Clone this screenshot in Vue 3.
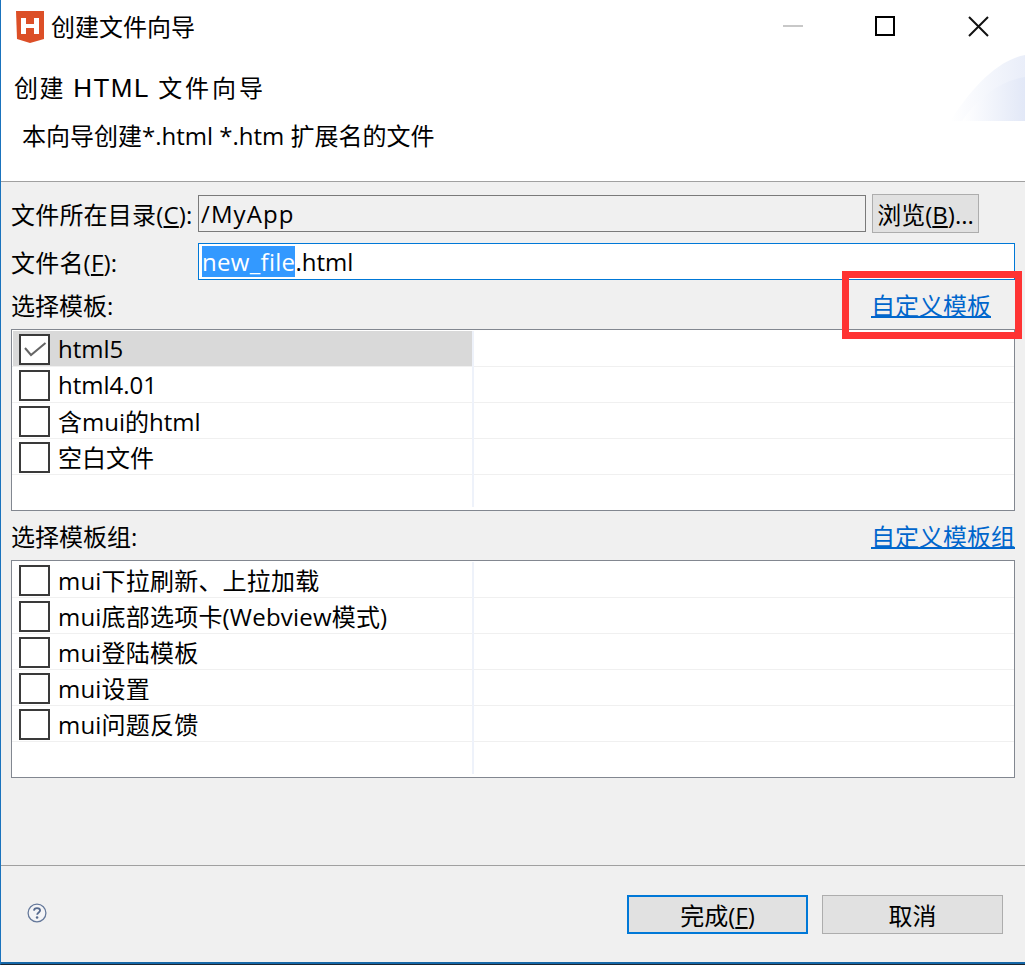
<script setup>
const templates = [
  { name: "html5", checked: true, selected: true },
  { name: "html4.01" },
  { name: "含mui的html" },
  { name: "空白文件" },
];
const groups = [
  { name: "mui下拉刷新、上拉加载" },
  { name: "mui底部选项卡(Webview模式)" },
  { name: "mui登陆模板" },
  { name: "mui设置" },
  { name: "mui问题反馈" },
];
</script>

<template>
  <div class="dialog">
    <div class="titlebar">
      <svg class="app-icon" width="28" height="32" viewBox="0 0 28 32">
        <path d="M0 0H28V28L14 32L1 28Z" fill="#dc4f27" />
        <path d="M5 7H10V13H18V7H23V23H18V17H10V23H5Z" fill="#fff" />
      </svg>
      <span class="title">创建文件向导</span>
      <div class="win-buttons">
        <svg width="22" height="22" viewBox="0 0 22 22"><rect x="0" y="9" width="20" height="2" fill="#c8c8c8" /></svg>
        <svg width="22" height="22" viewBox="0 0 22 22"><rect x="1" y="1" width="18" height="18" fill="none" stroke="#000" stroke-width="2" /></svg>
        <svg width="22" height="22" viewBox="0 0 22 22"><path d="M1 1L20 20M20 1L1 20" stroke="#111" stroke-width="2" fill="none" /></svg>
      </div>
    </div>

    <div class="banner">
      <h1 class="banner-title">创建 <span class="latin">HTML</span> <span class="tail">文件向导</span></h1>
      <p class="banner-desc">本向导创建*.html *.htm 扩展名的文件</p>
      <svg class="banner-art" width="75" height="66" viewBox="0 0 75 66">
        <defs>
          <linearGradient id="art-fade" x1="0" x2="1" y1="0" y2="0">
            <stop offset="0" stop-color="#fff" />
            <stop offset="1" stop-color="#e2e8f7" />
          </linearGradient>
        </defs>
        <path d="M0 66C20 36 45 6 75 0V66Z" fill="url(#art-fade)" opacity="0.75" />
        <path d="M12 66C28 42 50 26 75 22V66Z" fill="url(#art-fade)" />
      </svg>
    </div>

    <div class="form">
      <div class="field-row dir-row">
        <label class="field-label">文件所在目录(<u>C</u>):</label>
        <div class="readonly-input">/MyApp</div>
        <button class="btn browse">浏览(<u>B</u>)...</button>
      </div>
      <div class="field-row name-row">
        <label class="field-label">文件名(<u>F</u>):</label>
        <div class="text-input"><span class="sel">new_file</span>.html</div>
      </div>

      <div class="section-head first">
        <span>选择模板:</span>
        <a class="link link-inset">自定义模板</a>
      </div>
      <div class="table table-a">
        <div v-for="t in templates" :key="t.name" class="row">
          <div class="cell" :class="{ selected: t.selected }">
            <span class="check">
              <svg v-if="t.checked" width="27" height="27" viewBox="0 0 27 27">
                <path d="M4 12L10 19L24.5 7" fill="none" stroke="#666" stroke-width="2" />
              </svg>
            </span>
            <span class="name">{{ t.name }}</span>
          </div>
        </div>
      </div>

      <div class="section-head second">
        <span>选择模板组:</span>
        <a class="link">自定义模板组</a>
      </div>
      <div class="table table-b">
        <div v-for="g in groups" :key="g.name" class="row">
          <div class="cell">
            <span class="check"></span>
            <span class="name">{{ g.name }}</span>
          </div>
        </div>
      </div>
    </div>

    <div class="footer">
      <svg class="help" width="20" height="20" viewBox="0 0 22 22">
        <circle cx="11" cy="11" r="9.8" fill="#f4f4f6" stroke="#64789a" stroke-width="1.4" />
        <path d="M7.6 8.4C7.8 6.4 9.2 5.6 11 5.6C13 5.6 14.4 6.7 14.4 8.3C14.4 10.4 11.2 10.6 11.2 13" fill="none" stroke="#566a8e" stroke-width="2" />
        <circle cx="11.1" cy="16" r="1.4" fill="#566a8e" />
      </svg>
      <div class="footer-buttons">
        <button class="btn action primary">完成(<u>F</u>)</button>
        <button class="btn action">取消</button>
      </div>
    </div>

    <div class="highlight"></div>
  </div>
</template>

<style scoped>
.dialog {
  position: relative;
  width: 1025px;
  height: 965px;
  box-sizing: border-box;
  display: flex;
  flex-direction: column;
  background: #f0f0f0;
  border-left: 1px solid #1a73bd;
  border-bottom: 1px solid #1c2630;
  box-shadow: inset 0 -2px 0 #1668a8;
  overflow: hidden;
  font-family: "Open Sans", "Noto Sans CJK SC", sans-serif;
  font-size: 24px;
  color: #000;
}
.titlebar {
  height: 54px;
  flex: none;
  background: #fff;
  display: flex;
  align-items: center;
  padding-left: 15px;
}
.app-icon {
  margin-right: 7px;
}
.title {
  line-height: 54px;
}
.win-buttons {
  margin-left: auto;
  margin-right: 35px;
  display: flex;
  gap: 70px;
  align-items: center;
}
.win-buttons svg:nth-child(2) {
  margin-right: 1px;
}
.banner {
  position: relative;
  height: 127px;
  flex: none;
  background: #fff;
  border-bottom: 1px solid #a0a0a0;
  box-sizing: content-box;
}
.banner-title {
  margin: 0;
  padding: 16px 0 0 13px;
  font-size: 24px;
  font-weight: 400;
  line-height: 36px;
  letter-spacing: 1.5px;
  font-family: "Liberation Sans", "Noto Sans CJK SC", sans-serif;
}
.latin {
  font-size: 26px;
}
.tail {
  letter-spacing: 3px;
}
.banner-desc {
  margin: 11px 0 0;
  padding-left: 21px;
  line-height: 36px;
}
.banner-art {
  position: absolute;
  right: 0;
  top: 1px;
}
.form {
  flex: 1;
  padding: 12px 10px 0 10px;
}
.field-row {
  display: flex;
  align-items: center;
}
.field-label {
  width: 187px;
  flex: none;
  white-space: nowrap;
  letter-spacing: 0.2px;
}
.readonly-input {
  width: 668px;
  height: 37px;
  box-sizing: border-box;
  border: 1px solid #7a7a7a;
  padding-left: 2px;
  line-height: 35px;
  letter-spacing: 1.1px;
  background: #f0f0f0;
}
.browse {
  width: 107px;
  height: 39px;
  margin-left: 6px;
}
.btn {
  box-sizing: border-box;
  background: #e1e1e1;
  border: 1px solid #adadad;
  font: inherit;
  color: #000;
  padding: 0;
}
.name-row {
  margin-top: 10px;
}
.text-input {
  flex: 1;
  height: 37px;
  box-sizing: border-box;
  border: 1px solid #0078d7;
  background: #fff;
  padding: 2px 0 0 3px;
  line-height: 31px;
}
.sel {
  background: #3399ff;
  color: #fff;
  display: inline-block;
  height: 31px;
  line-height: 31px;
  letter-spacing: 0.3px;
}
.section-head {
  display: flex;
  justify-content: space-between;
  align-items: center;
  height: 36px;
}
.section-head.first {
  margin: 8px 0;
  height: 33px;
}
.section-head.second {
  margin: 6px 0 7px;
}
.link {
  color: #0066cc;
  text-decoration: underline;
  text-decoration-thickness: 2px;
}
.link-inset {
  margin-right: 24px;
}
.table {
  box-sizing: border-box;
  border: 1px solid #828790;
  background: #fff;
  padding-top: 1px;
  position: relative;
}
.table::after {
  content: "";
  position: absolute;
  left: 460px;
  top: 1px;
  bottom: 3px;
  width: 2px;
  background: #eef2fa;
}
.table-a {
  height: 182px;
}
.table-b {
  height: 218px;
}
.table-b .name {
  letter-spacing: 0.2px;
}
.row {
  height: 36px;
  box-sizing: border-box;
  border-bottom: 1px solid #f0f0f0;
}
.cell {
  width: 460px;
  height: 35px;
  display: flex;
  align-items: center;
  box-sizing: border-box;
  padding-left: 6px;
  margin-left: 1px;
}
.cell.selected {
  background: #d9d9d9;
}
.check {
  width: 31px;
  height: 31px;
  margin-top: 2px;
  box-sizing: border-box;
  border: 2px solid #3a3a3a;
  background: #fff;
  flex: none;
  display: flex;
}
.name {
  margin-left: 8px;
  white-space: nowrap;
}
.footer {
  height: 99px;
  flex: none;
  border-top: 1px solid #a0a0a0;
  display: flex;
  align-items: flex-start;
  justify-content: space-between;
  padding: 29px 22px 0 26px;
  box-sizing: border-box;
}
.help {
  margin-top: 8px;
}
.footer-buttons {
  display: flex;
  gap: 14px;
}
.action {
  width: 181px;
  height: 39px;
}
.primary {
  border: 2px solid #0078d7;
}
.highlight {
  position: absolute;
  left: 841px;
  top: 271px;
  width: 180px;
  height: 68px;
  box-sizing: border-box;
  border: 7px solid #ff3333;
  pointer-events: none;
}
</style>

<style>
html,
body {
  margin: 0;
  background: #f0f0f0;
}
</style>
